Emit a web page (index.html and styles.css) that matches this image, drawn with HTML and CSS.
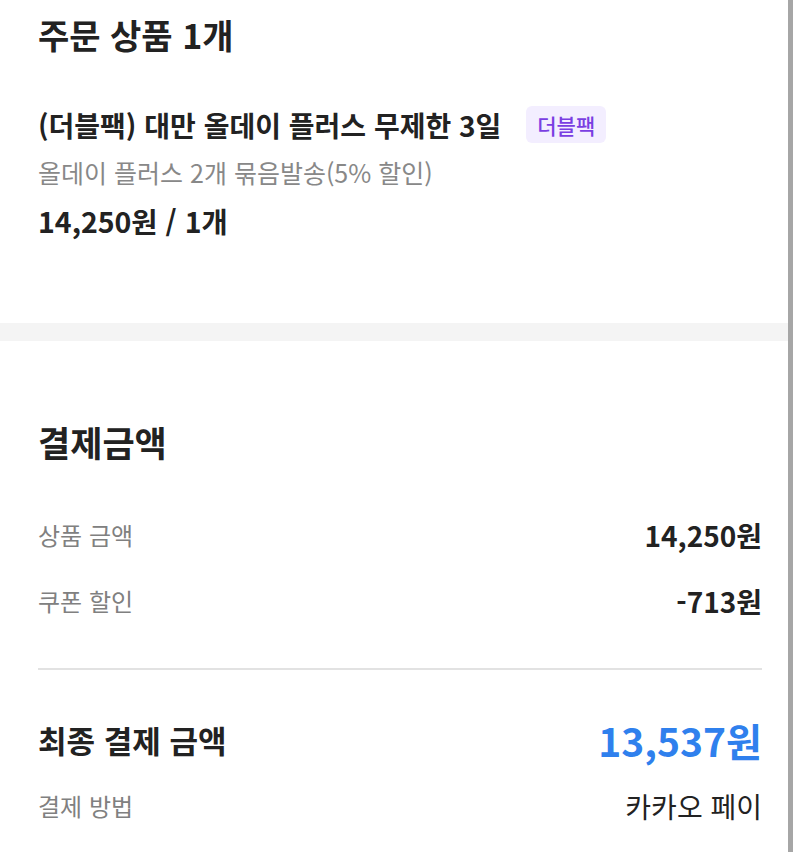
FILE: index.html
```html
<!DOCTYPE html>
<html lang="ko">
<head>
    <meta charset="UTF-8">
    <meta name="viewport" content="width=device-width, initial-scale=1.0">
    <title>주문 결제</title>
    <link rel="stylesheet" href="styles.css">
</head>
<body>
    <div class="page">
        <!-- 주문 상품 -->
        <div class="order">
            <h2 class="order_title">주문 상품 1개</h2>
            <div class="order_name">
                <span>(더블팩) 대만 올데이 플러스 무제한 3일</span>
                <span class="tag">더블팩</span>
            </div>
            <p class="order_desc">올데이 플러스 2개 묶음발송(5% 할인)</p>
            <p class="order_price">14,250원 / 1개</p>
        </div>

        <div class="gap"></div>

        <!-- 결제금액 -->
        <div class="pay">
            <h2 class="pay_title">결제금액</h2>
            <div class="pay_row pay_first">
                <span class="pay_label">상품 금액</span>
                <span class="pay_value">14,250원</span>
            </div>
            <div class="pay_row pay_second">
                <span class="pay_label">쿠폰 할인</span>
                <span class="pay_value">-713원</span>
            </div>
            <div class="line"></div>
            <div class="pay_row pay_total">
                <span class="total_label">최종 결제 금액</span>
                <span class="total_value">13,537원</span>
            </div>
            <div class="pay_row pay_method">
                <span class="pay_label">결제 방법</span>
                <span class="method_value">카카오 페이</span>
            </div>
        </div>
    </div>
</body>
</html>
```

FILE: styles.css
```css
*{
    margin: 0px;
    padding: 0px;
    box-sizing: border-box;
}
body{
    background: #ffffff;
    font-family: "Noto Sans CJK KR", "Noto Sans", sans-serif;
    color: rgb(34, 34, 34);
}
.page{
    width: 793px;
    min-height: 852px;
    border-right: 5px solid rgb(166, 166, 166);
}
.order{
    padding: 15px 26px 87px 38px;
}
.order_title{
    font-size: 34px;
    font-weight: 700;
    line-height: 40px;
}
.order_name{
    display: flex;
    align-items: center;
    gap: 25px;
    margin-top: 51px;
    height: 37px;
    font-size: 28px;
    font-weight: 700;
}
.tag{
    display: inline-flex;
    align-items: center;
    height: 37px;
    padding: 0 11px;
    border-radius: 6px;
    background: rgb(243, 238, 255);
    color: rgb(122, 62, 226);
    font-size: 21px;
    font-weight: 500;
}
.order_desc{
    margin-top: 14px;
    line-height: 30px;
    font-size: 25px;
    color: rgb(136, 136, 136);
}
.order_price{
    margin-top: 19px;
    line-height: 30px;
    font-size: 28.5px;
    font-weight: 700;
}
.gap{
    height: 18px;
    background: rgb(244, 244, 244);
}
.pay{
    padding: 81px 26px 40px 38px;
}
.pay_title{
    font-size: 35px;
    font-weight: 700;
    line-height: 40px;
}
.pay_row{
    display: flex;
    justify-content: space-between;
    align-items: center;
    line-height: 30px;
}
.pay_first{
    margin-top: 58px;
}
.pay_second{
    margin-top: 36px;
}
.pay_label{
    font-size: 24px;
    color: rgb(128, 128, 128);
}
.pay_value{
    font-size: 28px;
    font-weight: 700;
}
.line{
    height: 2px;
    margin-top: 52px;
    background: rgb(226, 226, 226);
}
.pay_total{
    margin-top: 48px;
    line-height: 44px;
}
.total_label{
    font-size: 31px;
    font-weight: 700;
}
.total_value{
    font-size: 39px;
    font-weight: 700;
    color: rgb(47, 128, 237);
}
.pay_method{
    margin-top: 29px;
}
.method_value{
    font-size: 28px;
}
```
